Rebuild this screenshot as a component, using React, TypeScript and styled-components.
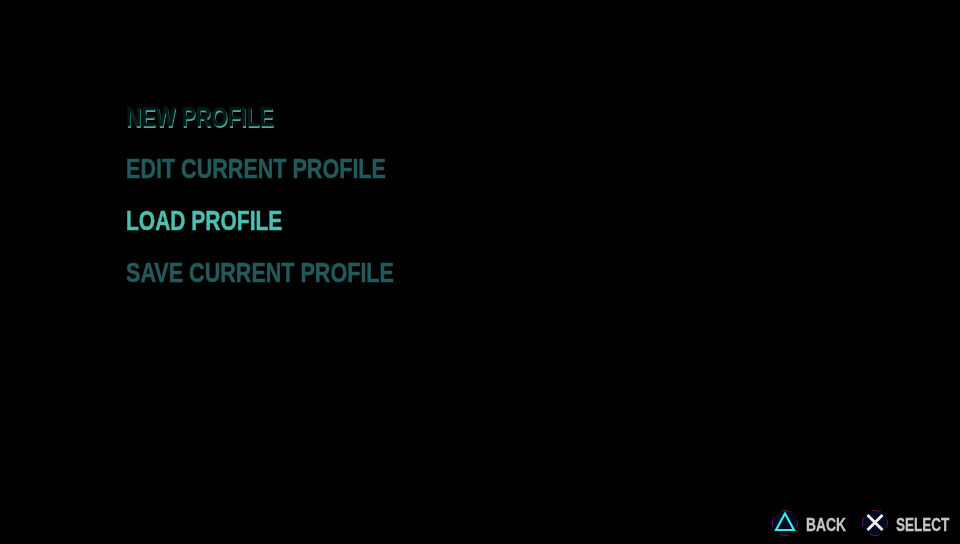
import styled, { createGlobalStyle } from "styled-components"

const GlobalStyle = createGlobalStyle`
  html, body {
    margin: 0;
    padding: 0;
    background: #000;
  }
`

const Screen = styled.div`
  width: 960px;
  height: 544px;
  background: #000;
  overflow: hidden;
  display: flex;
  flex-direction: column;
  justify-content: space-between;
  font-family: "Liberation Sans", Arial, sans-serif;
`

const Menu = styled.div`
  display: flex;
  flex-direction: column;
  align-items: flex-start;
  gap: 22px;
  padding: 102px 0 0 126px;
`

type ItemProps = {
  $state: "focused" | "idle" | "current"
  $squeeze: number
}

const Item = styled.div<ItemProps>`
  height: 30px;
  line-height: 29px;
  font-size: 28px;
  font-weight: 700;
  white-space: nowrap;
  transform-origin: left center;
  transform: scaleX(${(props) => props.$squeeze});
  -webkit-text-stroke: 0.5px currentColor;
  filter: blur(0.6px);
  color: ${(props) =>
    props.$state === "focused"
      ? "#031a19"
      : props.$state === "current"
        ? "#4cc0ae"
        : "#225a5a"};
  text-shadow: ${(props) =>
    props.$state === "focused" ? "1px 2px 0 #4aa898" : "none"};
`

const Footer = styled.div`
  display: flex;
  justify-content: flex-end;
  align-items: center;
  padding: 0 10px 7px 0;
`

const Hint = styled.div`
  display: flex;
  align-items: center;
  gap: 7px;
  margin-left: 16px;
`

const HintLabel = styled.span`
  color: #c4c4c4;
  font-size: 19px;
  font-weight: 700;
  display: inline-block;
  padding-top: 3px;
  transform-origin: left center;
  transform: scaleX(0.71);
  -webkit-text-stroke: 0.3px currentColor;
  filter: blur(0.6px);
`

const BackLabel = styled(HintLabel)`
  width: 39px;
  transform: scaleX(0.73);
`

const SelectLabel = styled(HintLabel)`
  width: 54px;
`

const PadGlyph = ({ kind }: { kind: "triangle" | "cross" }) => (
  <svg width="28" height="28" viewBox="0 0 28 28">
    <circle cx="14" cy="14" r="12" fill="#040a20" />
    <circle
      cx="14"
      cy="14"
      r="12.5"
      fill="none"
      stroke="#5a1668"
      strokeWidth="1"
      strokeDasharray="10 10"
      strokeDashoffset="5"
    />
    {kind === "triangle" ? (
      <path d="M14 4.5 L23 21 L5 21 Z" fill="none" stroke="#3fe6e6" strokeWidth="2.2" />
    ) : (
      <path
        d="M6.5 6 L21.5 21 M21.5 6 L6.5 21"
        fill="none"
        stroke="#f2f2f2"
        strokeWidth="2.8"
      />
    )}
  </svg>
)

export default function App() {
  return (
    <Screen>
      <GlobalStyle />
      <Menu>
        <Item $state="focused" $squeeze={0.76}>NEW PROFILE</Item>
        <Item $state="idle" $squeeze={0.77}>EDIT CURRENT PROFILE</Item>
        <Item $state="current" $squeeze={0.75}>LOAD PROFILE</Item>
        <Item $state="idle" $squeeze={0.77}>SAVE CURRENT PROFILE</Item>
      </Menu>
      <Footer>
        <Hint>
          <PadGlyph kind="triangle" />
          <BackLabel>BACK</BackLabel>
        </Hint>
        <Hint>
          <PadGlyph kind="cross" />
          <SelectLabel>SELECT</SelectLabel>
        </Hint>
      </Footer>
    </Screen>
  )
}
